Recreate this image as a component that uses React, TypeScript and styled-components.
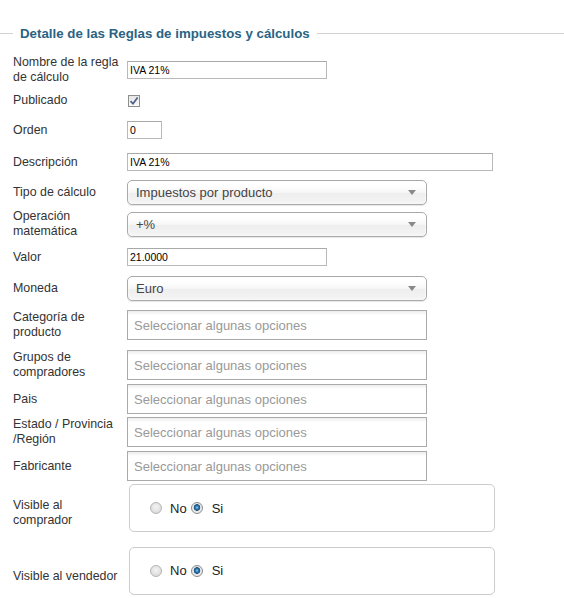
import React from "react";
import styled, { createGlobalStyle } from "styled-components";

const Global = createGlobalStyle`
  html, body { margin: 0; padding: 0; background: #fff; }
  body { font-family: "Liberation Sans", Arial, sans-serif; color: #333; }
`;

const Page = styled.div`
  width: 564px;
  padding-top: 26px;
  box-sizing: border-box;
`;

const Header = styled.div`
  display: flex;
  align-items: center;
  height: 15px;
`;

const Rule = styled.div<{ $w?: number }>`
  height: 1px;
  background: #d3d3d3;
  ${(p) => (p.$w ? `width: ${p.$w}px;` : "flex: 1;")}
`;

const Title = styled.h2`
  margin: 0;
  padding: 0 7px;
  font-size: 13.3px;
  line-height: 15px;
  font-weight: bold;
  color: #2a6384;
  white-space: nowrap;
`;

const Form = styled.div`
  display: flex;
  flex-direction: column;
  padding: 13px 0 0 13px;
`;

const Row = styled.div<{ $h: number }>`
  display: flex;
  align-items: center;
  height: ${(p) => p.$h}px;
`;

const Label = styled.div<{ $shift?: number }>`
  width: 114px;
  flex: none;
  box-sizing: border-box;
  padding-right: 6px;
  padding-top: ${(p) => p.$shift ?? 0}px;
  font-size: 12.4px;
  line-height: 15px;
  color: #333;
`;

const TextInput = styled.div<{ $w: number }>`
  width: ${(p) => p.$w}px;
  height: 18px;
  box-sizing: border-box;
  border: 1px solid #b9b9b9;
  border-top-color: #a9a9a9;
  background: #fff;
  font-size: 10.5px;
  line-height: 16px;
  padding-left: 2px;
  color: #000;
`;

const CheckBox = styled.span`
  margin-left: 1px;
  width: 12px;
  height: 12px;
  box-sizing: border-box;
  border: 1px solid #8e8f8f;
  background: linear-gradient(#e6e6e6, #fafafa);
  display: flex;
  align-items: center;
  justify-content: center;
`;

const Select = styled.div`
  width: 300px;
  height: 25px;
  box-sizing: border-box;
  border: 1px solid #aaa;
  border-radius: 5px;
  background: linear-gradient(#fff 20%, #f6f6f6 50%, #eee 52%, #f4f4f4 100%);
  box-shadow: inset 0 0 3px #fff, 0 1px 1px rgba(0, 0, 0, 0.1);
  display: flex;
  align-items: center;
  padding: 0 10px 0 8px;
  font-size: 13px;
  color: #444;
`;

const SelectText = styled.span`
  flex: 1;
`;

const Arrow = styled.span`
  width: 0;
  height: 0;
  border-left: 4px solid transparent;
  border-right: 4px solid transparent;
  border-top: 5px solid #8a8a8a;
`;

const Multi = styled.div`
  width: 300px;
  height: 30px;
  box-sizing: border-box;
  border: 1px solid #aaa;
  background: linear-gradient(#eee 1%, #fff 15%);
  display: flex;
  align-items: center;
  padding-left: 6px;
  font-size: 13px;
  color: #999;
`;

const RadioBox = styled.div`
  margin-left: 2px;
  width: 366px;
  height: 48px;
  box-sizing: border-box;
  border: 1px solid #ccc;
  border-radius: 5px;
  display: flex;
  align-items: center;
  padding-left: 20px;
  font-size: 13px;
  color: #222;
`;

const Radio = styled.span<{ $on?: boolean }>`
  width: 12px;
  height: 12px;
  box-sizing: border-box;
  border-radius: 50%;
  border: 1px solid ${(p) => (p.$on ? "#8a8a8a" : "#b4b4b4")};
  background: ${(p) =>
    p.$on
      ? "radial-gradient(circle at 50% 45%, #9fd0f0 0, #2f7cb5 1.5px, #1b4f7a 3px, #e6e6e6 3.6px, #f4f4f4 100%)"
      : "radial-gradient(circle at 50% 40%, #f4f4f4, #d4d4d4)"};
  margin-right: ${(p) => (p.$on ? 9 : 8)}px;
`;

const RadioText = styled.span<{ $gap?: number }>`
  margin-right: ${(p) => p.$gap ?? 0}px;
`;

const PLACEHOLDER = "Seleccionar algunas opciones";

const SingleSelect = ({ value }: { value: string }) => (
  <Select>
    <SelectText>{value}</SelectText>
    <Arrow />
  </Select>
);

const YesNo = () => (
  <RadioBox>
    <Radio />
    <RadioText $gap={4}>No</RadioText>
    <Radio $on />
    <RadioText>Si</RadioText>
  </RadioBox>
);

export default function App() {
  return (
    <Page>
      <Global />
      <Header>
        <Rule $w={13} />
        <Title>Detalle de las Reglas de impuestos y cálculos</Title>
        <Rule />
      </Header>
      <Form>
        <Row $h={32}>
          <Label>Nombre de la regla de cálculo</Label>
          <TextInput $w={200}>IVA 21%</TextInput>
        </Row>
        <Row $h={29}>
          <Label>Publicado</Label>
          <CheckBox>
            <svg width="10" height="10" viewBox="0 0 10 10">
              <path d="M1.5 5.2 L4 7.8 L8.6 1.6" fill="none" stroke="#4b5f86" strokeWidth="1.7" />
            </svg>
          </CheckBox>
        </Row>
        <Row $h={30}>
          <Label>Orden</Label>
          <TextInput $w={35}>0</TextInput>
        </Row>
        <Row $h={34}>
          <Label>Descripción</Label>
          <TextInput $w={366}>IVA 21%</TextInput>
        </Row>
        <Row $h={27}>
          <Label>Tipo de cálculo</Label>
          <SingleSelect value="Impuestos por producto" />
        </Row>
        <Row $h={36}>
          <Label>Operación matemática</Label>
          <SingleSelect value="+%" />
        </Row>
        <Row $h={30}>
          <Label>Valor</Label>
          <TextInput $w={200}>21.0000</TextInput>
        </Row>
        <Row $h={32}>
          <Label>Moneda</Label>
          <SingleSelect value="Euro" />
        </Row>
        <Row $h={42}>
          <Label>Categoría de producto</Label>
          <Multi>{PLACEHOLDER}</Multi>
        </Row>
        <Row $h={38}>
          <Label>Grupos de compradores</Label>
          <Multi>{PLACEHOLDER}</Multi>
        </Row>
        <Row $h={30}>
          <Label>Pais</Label>
          <Multi>{PLACEHOLDER}</Multi>
        </Row>
        <Row $h={36}>
          <Label>Estado / Provincia /Región</Label>
          <Multi>{PLACEHOLDER}</Multi>
        </Row>
        <Row $h={32}>
          <Label>Fabricante</Label>
          <Multi>{PLACEHOLDER}</Multi>
        </Row>
        <Row $h={52}>
          <Label $shift={10}>Visible al comprador</Label>
          <YesNo />
        </Row>
        <Row $h={73}>
          <Label $shift={12}>Visible al vendedor</Label>
          <YesNo />
        </Row>
      </Form>
    </Page>
  );
}
